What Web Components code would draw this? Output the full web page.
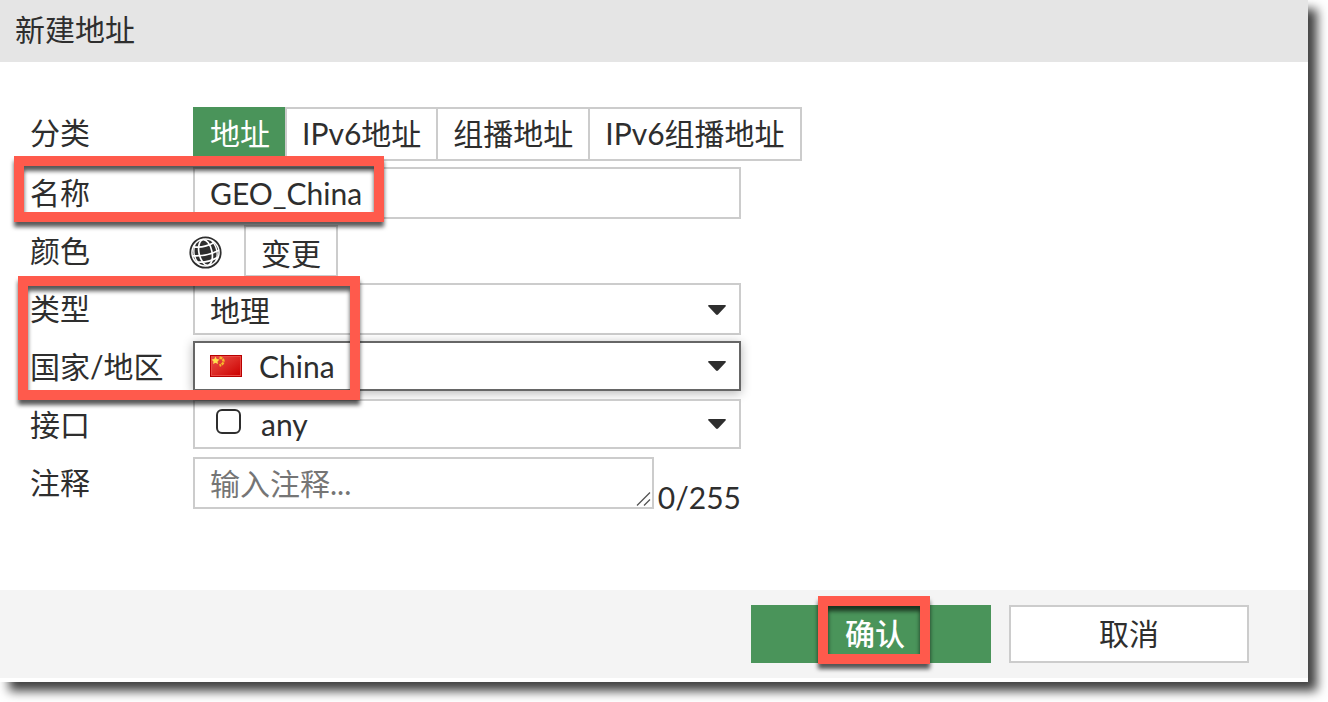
<!DOCTYPE html>
<html lang="zh-CN">
<head>
<meta charset="utf-8">
<meta name="viewport" content="width=device-width, initial-scale=1">
<title>新建地址</title>
<style>
  body {
    margin: 0;
    background: #fff;
    color: #2e2e2e;
    font: 30px/48px Lato, "Noto Sans CJK SC", sans-serif;
  }
</style>
</head>
<body>
<address-dialog heading="新建地址">
  <type-tabs label="分类"></type-tabs>
  <name-field label="名称" value="GEO_China"></name-field>
  <color-field label="颜色" action="变更"></color-field>
  <select-field label="类型" value="地理"></select-field>
  <select-field label="国家/地区" value="China" active>
    <svg slot="icon" width="32" height="22" viewBox="0 0 32 22" aria-hidden="true">
      <defs>
        <linearGradient id="flagRed" x1="0" y1="0" x2="1" y2="1">
          <stop offset="0" stop-color="#e8504a"/>
          <stop offset=".5" stop-color="#dc2a25"/>
          <stop offset="1" stop-color="#cc0000"/>
        </linearGradient>
      </defs>
      <rect width="32" height="22" fill="#b80000"/>
      <rect x="1.5" y="1.5" width="29" height="19" fill="url(#flagRed)" stroke="#e84a45" stroke-width="1"/>
      <path d="M5.500 1.500l1.200 2.500 2.800.4-2 2 .4 2.700-2.400-1.300-2.400 1.300.4-2.700-2-2 2.800-.4z" fill="#ffe14d"/>
      <path d="M9.500 2.500q4 1 4 3.700 0 3-4 4.300" fill="none" stroke="#f6b92c" stroke-width="2.400" stroke-dasharray="2.800 .7"/>
    </svg>
  </select-field>
  <select-field label="接口" value="any">
    <svg slot="icon" width="34" height="32" viewBox="0 0 34 32" fill="none" aria-hidden="true">
      <rect x="7" y="2" width="23" height="23" rx="5" stroke="#2e2e2e" stroke-width="2"/>
    </svg>
  </select-field>
  <comment-field label="注释" placeholder="输入注释..." max="255"></comment-field>
  <highlight-box slot="mark" style="left:14px;top:156px;width:370px;height:66px"></highlight-box>
  <highlight-box slot="mark" style="left:18px;top:276px;width:342px;height:124px"></highlight-box>
  <dialog-button slot="footer" text="确认" primary>
    <highlight-box style="left:67px;top:-9px;width:112px;height:68px"></highlight-box>
  </dialog-button>
  <dialog-button slot="footer" text="取消"></dialog-button>
</address-dialog>

<script>
(function () {
  // shared by every form row
  const rowStyle = `
    :host {
      display: grid;
      grid-template-columns: 163px minmax(0, 548px);
      align-items: start;
      min-height: 52px;
    }
    * { box-sizing: border-box; }
    .name { line-height: 50px; white-space: nowrap; }
    input, select, textarea, button { font: inherit; color: inherit; border-radius: 0; margin: 0; }
  `;

  function attach(el, html) {
    const template = document.createElement("template");
    template.innerHTML = html;
    const root = el.attachShadow({ mode: "open" });
    root.appendChild(template.content.cloneNode(true));
    return root;
  }

  class AddressDialog extends HTMLElement {
    connectedCallback() {
      attach(this, `
        <style>
          :host {
            display: block;
            position: relative;
            margin: 0 20px 20px 0;
            padding-bottom: 4px;
            background: #fff;
            box-shadow: 9px 9px 10px rgba(0, 0, 0, .75);
          }
          h1 {
            margin: 0;
            padding: 0 15px 4px;
            font: inherit;
            line-height: 58px;
            background: #e5e5e5;
          }
          form { display: grid; gap: 6px; padding: 45px 30px 81px; }
          footer {
            display: flex;
            justify-content: flex-end;
            gap: 18px;
            padding: 15px 59px;
            background: #f4f4f4;
          }
        </style>
        <h1>${this.getAttribute("heading")}</h1>
        <form><slot></slot></form>
        <footer><slot name="footer"></slot></footer>
        <slot name="mark"></slot>
      `);
    }
  }

  class TypeTabs extends HTMLElement {
    connectedCallback() {
      const tabs = ["地址", "IPv6地址", "组播地址", "IPv6组播地址"];
      attach(this, `
        <style>${rowStyle}
          .tabs { display: flex; }
          .tabs label {
            position: relative;
            flex: none;
            padding: 0 15px 2px;
            border: 2px solid #ccc;
            line-height: 48px;
            white-space: nowrap;
          }
          .tabs label + label { margin-left: -2px; }
          .tabs label:has(:checked) { background: #4a945a; border-color: #4a945a; color: #fff; }
          .tabs input { position: absolute; inset: 0; opacity: 0; }
        </style>
        <span class="name" id="name">${this.getAttribute("label")}</span>
        <div class="tabs" role="radiogroup" aria-labelledby="name">
          ${tabs.map((t, i) => `<label><input type="radio" name="category"${i ? "" : " checked"}>${t}</label>`).join("")}
        </div>
      `);
    }
  }

  class NameField extends HTMLElement {
    connectedCallback() {
      attach(this, `
        <style>${rowStyle}
          input { width: 100%; height: 52px; padding: 0 15px; border: 2px solid #ccc; background: #fff; }
        </style>
        <label class="name" for="name">${this.getAttribute("label")}</label>
        <input id="name" type="text" value="${this.getAttribute("value")}">
      `);
    }
  }

  class ColorField extends HTMLElement {
    connectedCallback() {
      attach(this, `
        <style>${rowStyle}
          .pick { display: flex; align-items: center; }
          svg { flex: none; margin: 2px 22px 0 -4px; }
          button { height: 52px; padding: 2px 15px 0; border: 2px solid #ccc; background: #fff; }
        </style>
        <label class="name" for="change">${this.getAttribute("label")}</label>
        <div class="pick">
          <svg width="33" height="33" viewBox="0 0 33 33" aria-hidden="true">
            <circle cx="16.500" cy="16.500" r="15.200" fill="#fff" stroke="#2e2e2e" stroke-width="1.800"/>
            <circle cx="16.500" cy="16.500" r="12.800" fill="#2e2e2e"/>
            <g transform="rotate(-12 16.5 16.5)" fill="none" stroke="#fff" stroke-width="1.700">
              <ellipse cx="16.500" cy="16.500" rx="6.500" ry="13"/>
              <path d="M6 8.500q10.500 3.500 21 0M3 17q13.500 4 27 0M5 23.500q11.500 4 23 0"/>
              <path d="M8 6q-6 10.500 0 21M25 6q6 10.500 0 21" stroke-width="1.300"/>
            </g>
          </svg>
          <button id="change" type="button">${this.getAttribute("action")}</button>
        </div>
      `);
    }
  }

  class SelectField extends HTMLElement {
    connectedCallback() {
      attach(this, `
        <style>${rowStyle}
          .box {
            display: flex;
            align-items: center;
            height: 52px;
            padding: 2px 13px 0 15px;
            border: 2px solid #ccc;
            background: #fff;
          }
          .box.icon { height: 50px; padding-top: 0; }
          :host([active]) .box { border-color: #666; box-shadow: 0 2px 10px rgba(0, 0, 0, .3); }
          ::slotted(svg) { flex: none; margin-right: 17px; }
          select { flex: 1; min-width: 0; padding: 0; border: 0; background: none; appearance: none; outline: 0; }
          .caret { flex: none; pointer-events: none; }
        </style>
        <label class="name" for="value">${this.getAttribute("label")}</label>
        <div class="box${this.children.length ? " icon" : ""}">
          <slot name="icon"></slot>
          <select id="value"><option>${this.getAttribute("value")}</option></select>
          <svg class="caret" width="18" height="10" viewBox="0 0 18 10" aria-hidden="true">
            <path d="M1 0h16q1.500.4.500 1.500L10 9.500q-1 .9-2 0L.5 1.500Q-.5.400 1 0z" fill="#2e2e2e"/>
          </svg>
        </div>
      `);
    }
  }

  class CommentField extends HTMLElement {
    connectedCallback() {
      const max = this.getAttribute("max");
      const root = attach(this, `
        <style>${rowStyle}
          .line { display: flex; gap: 4px; align-items: flex-end; }
          .area { position: relative; flex: 1; min-width: 0; display: flex; }
          textarea {
            width: 100%;
            height: 52px;
            padding: 0 15px;
            border: 2px solid #ccc;
            background: #fff;
            resize: none;
            overflow: hidden;
          }
          textarea::placeholder { color: #757575; }
          .grip { position: absolute; right: 3px; bottom: 3px; pointer-events: none; }
          output { line-height: 24px; }
        </style>
        <label class="name" for="comment">${this.getAttribute("label")}</label>
        <div class="line">
          <div class="area">
            <textarea id="comment" rows="1" maxlength="${max}" placeholder="${this.getAttribute("placeholder")}"></textarea>
            <svg class="grip" width="15" height="14" viewBox="0 0 15 14" stroke="#555" stroke-width="1.300" aria-hidden="true">
              <path d="M1 13.500L14 .5M8 13.500l6-6"/>
            </svg>
          </div>
          <output for="comment">0/${max}</output>
        </div>
      `);
      const area = root.querySelector("textarea");
      area.addEventListener("input", () => {
        root.querySelector("output").textContent = area.value.length + "/" + max;
      });
    }
  }

  class DialogButton extends HTMLElement {
    connectedCallback() {
      attach(this, `
        <style>
          :host { display: block; position: relative; width: 240px; }
          button {
            display: block;
            width: 100%;
            height: 58px;
            padding: 0 0 2px;
            border: 2px solid #ccc;
            background: #fff;
            color: inherit;
            font: inherit;
          }
          :host([primary]) button {
            padding-left: 8px;
            border-color: #4a945a;
            background: #4a945a;
            color: #fff;
            font-weight: 500;
          }
        </style>
        <button type="button">${this.getAttribute("text")}</button>
        <slot></slot>
      `);
    }
  }

  // red frame laid over the controls it points out
  class HighlightBox extends HTMLElement {
    connectedCallback() {
      attach(this, `
        <style>
          :host {
            display: block;
            position: absolute;
            box-sizing: border-box;
            border: 10px solid #ff5a4c;
            filter: drop-shadow(0 5px 2px rgba(0, 0, 0, .65));
            pointer-events: none;
          }
        </style>
      `);
    }
  }

  customElements.define("address-dialog", AddressDialog);
  customElements.define("type-tabs", TypeTabs);
  customElements.define("name-field", NameField);
  customElements.define("color-field", ColorField);
  customElements.define("select-field", SelectField);
  customElements.define("comment-field", CommentField);
  customElements.define("dialog-button", DialogButton);
  customElements.define("highlight-box", HighlightBox);
})();
</script>
</body>
</html>
